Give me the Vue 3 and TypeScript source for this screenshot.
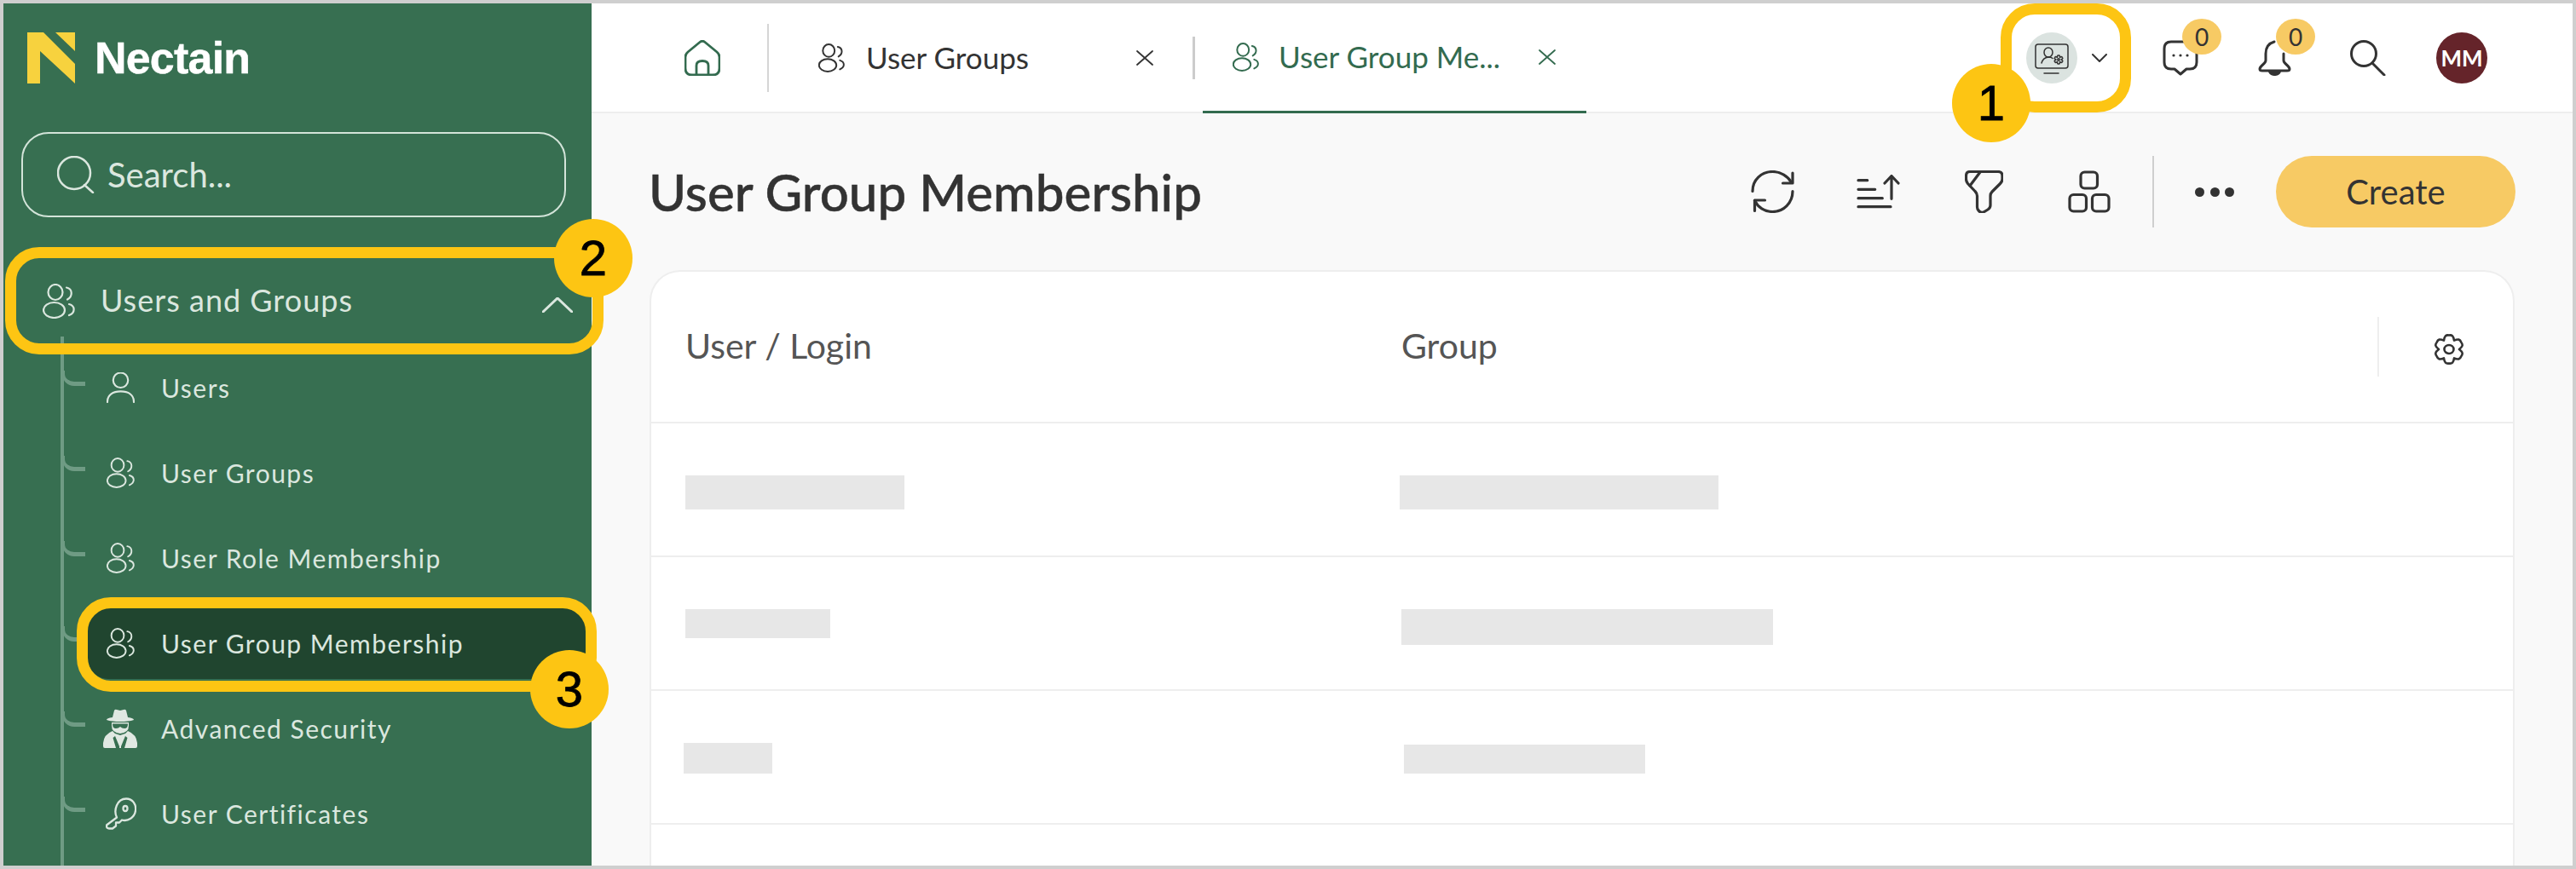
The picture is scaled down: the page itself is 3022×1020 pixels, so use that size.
<script setup lang="ts">
interface NavItem {
  label: string
  icon: string
  active?: boolean
}

const navItems: NavItem[] = [
  { label: 'Users', icon: 'user' },
  { label: 'User Groups', icon: 'users' },
  { label: 'User Role Membership', icon: 'users' },
  { label: 'User Group Membership', icon: 'users', active: true },
  { label: 'Advanced Security', icon: 'spy' },
  { label: 'User Certificates', icon: 'key' },
]

// offsets are relative to the start of each column
const rows = [
  [{ x: 0, y: 0, w: 257, h: 40 }, { x: -2, y: 0, w: 374, h: 40 }],
  [{ x: 0, y: 0, w: 170, h: 34 }, { x: 0, y: 0, w: 436, h: 42 }],
  [{ x: -2, y: 0, w: 104, h: 36 }, { x: 3, y: 2, w: 283, h: 34 }],
  [],
]

function skeletonStyle(c: { x: number; y: number; w: number; h: number }) {
  return {
    width: c.w + 'px',
    height: c.h + 'px',
    marginLeft: c.x + 'px',
    marginTop: c.y + 'px',
  }
}

function gearPath(cx: number, cy: number, rIn: number, rOut: number, lobes: number) {
  let d = ''
  const step = (Math.PI * 2) / lobes
  for (let i = 0; i < lobes; i++) {
    const a = i * step - Math.PI / 2
    const px = (r: number, t: number) => (cx + Math.cos(t) * r).toFixed(2)
    const py = (r: number, t: number) => (cy + Math.sin(t) * r).toFixed(2)
    if (i === 0) d += `M${px(rIn, a - step / 2)} ${py(rIn, a - step / 2)}`
    d += ` C${px(rOut, a - step / 3.2)} ${py(rOut, a - step / 3.2)} ${px(rOut + 1, a - step / 5)} ${py(rOut + 1, a - step / 5)} ${px(rOut, a)} ${py(rOut, a)}`
    d += ` C${px(rOut + 1, a + step / 5)} ${py(rOut + 1, a + step / 5)} ${px(rOut, a + step / 3.2)} ${py(rOut, a + step / 3.2)} ${px(rIn, a + step / 2)} ${py(rIn, a + step / 2)}`
  }
  return d + ' Z'
}
</script>

<template>
  <div class="frame">
    <svg class="defs" width="0" height="0">
      <symbol id="i-users" viewBox="0 0 38 41">
        <ellipse cx="15" cy="10" rx="8.500" ry="9" />
        <ellipse cx="13.500" cy="31" rx="12.500" ry="9" />
        <path d="M28 4.500C35.500 6 35.500 15 29 18.500" />
        <path d="M31 24C38.500 26 38.500 34 31 37" />
      </symbol>
      <symbol id="i-user" viewBox="0 0 34 37">
        <ellipse cx="17" cy="9.500" rx="9" ry="9" />
        <path d="M1 36C1 27 8 23 17 23S33 27 33 36" />
      </symbol>
    </svg>

    <aside class="sidebar">
      <div class="brand">
        <svg class="brand-mark" viewBox="0 0 56 60">
          <path d="M0 0H19L56 37V60L15 22V60H0Z" fill="#f7d23e" />
          <path d="M33 0H56V22Z" fill="#f7d23e" />
        </svg>
        <span class="brand-name">Nectain</span>
      </div>

      <div class="search">
        <svg class="search-icon" viewBox="0 0 44 44">
          <ellipse cx="20" cy="20" rx="19" ry="19" />
          <path d="M32 34L42 43" />
        </svg>
        <span>Search...</span>
      </div>

      <div class="group">
        <svg class="group-icon"><use href="#i-users" /></svg>
        <span class="group-label">Users and Groups</span>
        <svg class="group-chevron" viewBox="0 0 36 18">
          <path d="M1 17L18 1L35 17" />
        </svg>
      </div>

      <ul class="tree">
        <li v-for="item in navItems" :key="item.label" class="tree-item">
          <div class="tree-body" :class="{ active: item.active }">
            <svg v-if="item.icon === 'user'" class="tree-icon"><use href="#i-user" /></svg>
            <svg v-else-if="item.icon === 'users'" class="tree-icon"><use href="#i-users" /></svg>
            <svg v-else-if="item.icon === 'spy'" class="tree-icon spy" viewBox="0 0 40 46">
              <path d="M11 10L13 2Q14 0 16 1L20 2L24 1Q26 0 27 2L29 10Q36 11 36 13Q30 15 20 15T4 13Q4 11 11 10Z" />
              <path d="M10 16H30V20Q30 28 20 29Q10 28 10 20Z" />
              <path class="spy-cut" d="M11 17.500H29Q29 23 25 23Q22 23 20 21Q18 23 15 23Q11 23 11 17.500Z" />
              <path d="M11 26L14 29L20 31L26 29L29 26Q39 30 40 40V44Q40 46 38 46H2Q0 46 0 44V40Q1 30 11 26Z" />
              <path class="spy-cut" d="M13 29.500L19 44V46H15L11.500 34L14 32Z" />
              <path class="spy-cut" d="M27 29.500L21 44V46H25L28.500 34L26 32Z" />
            </svg>
            <svg v-else class="tree-icon key" viewBox="0 0 36 37">
              <path d="M13 23C9 15 13 1 24 1C32 1 36 8 35 15C34 23 26 28 19 26L16 29H12V33L8 36H4Q1 36 1 33V32Z" />
              <ellipse cx="23" cy="12.500" rx="2.500" ry="3" />
            </svg>
            <span>{{ item.label }}</span>
          </div>
        </li>
      </ul>
    </aside>

    <main class="main">
      <header class="topbar">
        <svg class="home" viewBox="0 0 42 42">
          <path d="M18 2.500Q21 0 24 2.500L38 14Q41 16.500 41 20V33Q41 41 33 41H9Q1 41 1 33V20Q1 16.500 4 14Z" />
          <path d="M14 40V30Q14 24.500 21 24.500Q28 24.500 28 30V40" />
        </svg>
        <span class="tall-divider"></span>
        <div class="tab">
          <svg class="tab-icon"><use href="#i-users" /></svg>
          <span class="tab-label">User Groups</span>
          <svg class="tab-close" viewBox="0 0 20 18"><path d="M1 1L19 17M19 1L1 17" /></svg>
        </div>
        <span class="short-divider"></span>
        <div class="tab tab-active">
          <svg class="tab-icon"><use href="#i-users" /></svg>
          <span class="tab-label">User Group Me...</span>
          <svg class="tab-close" viewBox="0 0 20 18"><path d="M1 1L19 17M19 1L1 17" /></svg>
        </div>

        <div class="top-actions">
          <div class="env">
            <svg viewBox="0 0 40 36">
              <rect x="1" y="1" width="38" height="28" rx="3" />
              <path d="M11 35H28" />
              <ellipse cx="16" cy="10.500" rx="5" ry="5.500" />
              <path d="M8 23C9 19 12 16.500 16 16C18 16 20 16.500 21 17.500" />
              <path :d="gearPath(28, 19, 3, 4.800, 6)" />
              <circle cx="28" cy="19" r="1.200" />
            </svg>
          </div>
          <svg class="chev" viewBox="0 0 18 10"><path d="M1 1L9 9L17 1" /></svg>
          <div class="notify chat">
            <svg viewBox="0 0 42 42">
              <path d="M30 2H10Q2 2 2 10V26Q2 34 10 34H14L21 40L28 34H32Q40 34 40 26V10" />
              <circle cx="13" cy="18" r="1.600" class="dot" />
              <circle cx="21" cy="18" r="1.600" class="dot" />
              <circle cx="29" cy="18" r="1.600" class="dot" />
            </svg>
            <span class="count">0</span>
          </div>
          <div class="notify bell">
            <svg viewBox="0 0 39 42">
              <path d="M19 2C12 4 9 9 9 16V24C9 28 2 30 2 34Q2 36 5 36H34Q37 36 37 34C37 30 30 28 30 24V16" />
              <path d="M12 37H27C26 41 22 42 19.500 42S13 41 12 37Z" class="dot" />
            </svg>
            <span class="count">0</span>
          </div>
          <svg class="top-search" viewBox="0 0 42 42">
            <ellipse cx="16" cy="16" rx="14.500" ry="14.500" />
            <path d="M26 27L40 41" />
          </svg>
          <div class="avatar">MM</div>
        </div>
      </header>

      <section class="page-head">
        <h1>User Group Membership</h1>
        <div class="tools">
          <svg class="tool refresh" viewBox="0 0 51 50">
            <path d="M2 24.500C2 11 12.500 1.500 25.500 1.500C35 1.500 43.500 7 47.500 14" />
            <path d="M49 3V15H37.500" />
            <path d="M49 24.500C49 38 38.500 48.500 25.500 48.500C16 48.500 8 43 4.500 35.500" />
            <path d="M4.500 47.500V35H16.500" />
          </svg>
          <svg class="tool sort" viewBox="0 0 51 40">
            <path d="M2 6.700H12.700M2 17.300H21.700M2 27.700H30.300M2 37.700H40" />
            <path d="M41 28.300V2M33 10L41 1.500L49 10" />
          </svg>
          <svg class="tool filter" viewBox="0 0 45 50">
            <path d="M6 1.500H39Q44 1.500 44 6.500V10Q44 13 41.500 15.500L32 25Q30 27 30 30V41Q30 44 27 46L22 49Q19 50 17 48L16 47Q14.500 45 14.500 43V30Q14.500 27 12 24.500L3.500 15.500Q1.500 13 1.500 10V6.500Q1.500 1.500 6 1.500Z" />
            <path d="M18 2L6 18" />
          </svg>
          <svg class="tool apps" viewBox="0 0 50 50">
            <rect x="15" y="2" width="19.500" height="19" rx="4.500" />
            <rect x="2" y="28.500" width="19.500" height="19.500" rx="4.500" />
            <rect x="28.500" y="28.500" width="19.500" height="19.500" rx="4.500" />
          </svg>
          <span class="tool-divider"></span>
          <div class="dots"><i></i><i></i><i></i></div>
          <button class="create">Create</button>
        </div>
      </section>

      <section class="card">
        <div class="card-head">
          <span class="col">User / Login</span>
          <span class="col">Group</span>
          <span class="head-divider"></span>
          <svg class="gear" viewBox="0 0 40 36">
            <path :d="gearPath(20, 18, 12, 16.500, 6)" />
            <ellipse cx="20" cy="18" rx="5.500" ry="5" />
          </svg>
        </div>
        <div v-for="(row, i) in rows" :key="i" class="row">
          <div v-for="(c, j) in row" :key="j" class="cell">
            <div class="skeleton" :style="skeletonStyle(c)"></div>
          </div>
        </div>
      </section>
    </main>

    <!-- tutorial callouts lying over the ui -->
    <div class="hl hl-1"></div>
    <div class="hl hl-2"></div>
    <div class="hl hl-3"></div>
    <div class="badge b-1">1</div>
    <div class="badge b-2">2</div>
    <div class="badge b-3">3</div>
  </div>
</template>

<style>
html,
body {
  margin: 0;
  background: #fff;
}
</style>

<style scoped>
.frame {
  position: relative;
  box-sizing: border-box;
  width: 3022px;
  height: 1020px;
  border: 4px solid #cfcfcf;
  display: flex;
  overflow: hidden;
  font-family: Lato, "Noto Sans", sans-serif;
  color: #333;
}

.defs {
  position: absolute;
}

svg {
  fill: none;
  stroke: currentColor;
  stroke-linecap: round;
  stroke-linejoin: round;
  flex: none;
  display: block;
}

/* sidebar */
.sidebar {
  position: relative;
  width: 690px;
  flex: none;
  background: #376f51;
  color: #dbe7df;
  overflow: hidden;
}

.brand {
  display: flex;
  align-items: center;
  height: 60px;
  margin: 34px 0 0 28px;
  gap: 23px;
}

.brand-mark {
  width: 56px;
  height: 60px;
  stroke: none;
}

.brand-name {
  font-family: "Liberation Sans", Arial, sans-serif;
  font-size: 52px;
  font-weight: 700;
  letter-spacing: -0.8px;
  color: #fff;
  -webkit-text-stroke: 0.4px #fff;
}

.search {
  box-sizing: border-box;
  display: flex;
  align-items: center;
  width: 639px;
  height: 100px;
  margin: 57px 0 0 21px;
  padding-left: 40px;
  gap: 15px;
  border: 2px solid #d3e4d9;
  border-radius: 32px;
  font-size: 40px;
}

.search-icon {
  width: 44px;
  height: 44px;
  stroke-width: 2.5;
}

.group {
  display: flex;
  align-items: center;
  height: 100px;
  margin-top: 48px;
  padding-left: 46px;
  font-size: 36px;
  letter-spacing: 1px;
}

.group-icon {
  width: 38px;
  height: 41px;
  stroke-width: 2.2;
}

.group-label {
  margin-left: 30px;
  margin-top: -2px;
}

.group-chevron {
  width: 36px;
  height: 18px;
  margin-left: auto;
  margin-right: 22px;
  margin-top: 10px;
  stroke-width: 3;
}

.tree {
  position: relative;
  list-style: none;
  margin: 2px 0 0;
  padding: 0;
  font-size: 30px;
  letter-spacing: 1.5px;
}

.tree::before {
  content: "";
  position: absolute;
  left: 67px;
  top: -10px;
  height: 700px;
  width: 4px;
  background: #6f9b84;
}

.tree-item {
  position: relative;
  height: 100px;
  display: flex;
  align-items: center;
  padding-left: 99px;
}

.tree-item::before {
  content: "";
  position: absolute;
  left: 69px;
  top: 30px;
  width: 27px;
  height: 18px;
  border-left: 3px solid #6f9b84;
  border-bottom: 5px solid #6f9b84;
  border-bottom-left-radius: 14px;
  box-sizing: border-box;
}

.tree-body {
  flex: 1;
  display: flex;
  align-items: center;
  height: 84px;
  padding-left: 22px;
  border-radius: 24px;
}

.tree-body.active {
  background: #20452f;
}

.tree-icon {
  width: 33px;
  height: 36px;
  stroke-width: 2.2;
}

.tree-icon.spy {
  width: 40px;
  height: 46px;
  margin-left: -4px;
  margin-right: -3px;
  fill: #e0e8e2;
  stroke: none;
}

.spy-cut {
  fill: #376f51;
}

.tree-icon.key {
  width: 36px;
  height: 38px;
  margin-left: -1px;
  margin-right: -2px;
  stroke-width: 2.300;
}

.tree-body span {
  margin-left: 31px;
}

/* main */
.main {
  flex: 1;
  min-width: 0;
  display: flex;
  flex-direction: column;
  background: #f9f9f9;
  overflow: hidden;
}

.topbar {
  box-sizing: border-box;
  display: flex;
  align-items: center;
  flex: none;
  height: 129px;
  padding-left: 109px;
  padding-right: 100px;
  background: #fff;
  border-bottom: 2px solid #eeeeee;
}

.home {
  width: 42px;
  height: 42px;
  color: #336b4f;
  stroke-width: 2.800;
}

.tall-divider {
  width: 2px;
  height: 80px;
  margin-left: 55px;
  background: #d5d5d5;
}

.short-divider {
  width: 3px;
  height: 50px;
  background: #cccccc;
}

.tab {
  box-sizing: border-box;
  align-self: stretch;
  display: flex;
  align-items: center;
  width: 497px;
  padding-left: 58px;
  padding-right: 46px;
  font-size: 35px;
  color: #333;
}

.tab-active {
  width: 450px;
  margin-left: 9px;
  margin-bottom: -2px;
  padding-left: 35px;
  padding-right: 36px;
  color: #336b4f;
  border-bottom: 3px solid #336b4f;
}

.tab-icon {
  width: 31px;
  height: 34px;
  stroke-width: 2.400;
}

.tab-label {
  flex: 1;
  margin-left: 25px;
  margin-top: -2px;
  white-space: nowrap;
}

.tab-active .tab-label {
  margin-left: 23px;
}

.tab-close {
  width: 20px;
  height: 18px;
  stroke-width: 1.800;
}

.top-actions {
  margin-left: auto;
  display: flex;
  align-items: center;
}

.env {
  width: 60px;
  height: 60px;
  border-radius: 50%;
  background: #dbe3e0;
  display: flex;
  align-items: center;
  justify-content: center;
}

.env svg {
  width: 40px;
  height: 36px;
  stroke-width: 1.500;
  margin-top: 2px;
}

.chev {
  width: 18px;
  height: 10px;
  margin-left: 17px;
  stroke-width: 2;
}

.notify {
  position: relative;
  width: 42px;
  height: 42px;
}

.notify svg {
  width: 100%;
  height: 100%;
  stroke-width: 3;
}

.dot {
  fill: currentColor;
  stroke: none;
}

.chat {
  margin-left: 65px;
}

.bell {
  width: 39px;
  margin-left: 70px;
}

.count {
  position: absolute;
  left: 23px;
  top: -25px;
  width: 46px;
  height: 42px;
  border-radius: 50%;
  background: #f7ca64;
  font-size: 28px;
  line-height: 42px;
  text-align: center;
}

.bell .count {
  left: 21px;
}

.top-search {
  width: 42px;
  height: 42px;
  margin-left: 69px;
  stroke-width: 3;
}

.avatar {
  width: 60px;
  height: 60px;
  margin-left: 59px;
  border-radius: 50%;
  background: #65242a;
  color: #fff;
  font-size: 26px;
  font-weight: 700;
  line-height: 60px;
  text-align: center;
}

.page-head {
  flex: none;
  display: flex;
  align-items: center;
  height: 84px;
  margin-top: 50px;
  padding: 0 67px;
}

h1 {
  margin: 0;
  font-size: 60px;
  font-weight: 500;
  color: #333;
  white-space: nowrap;
  -webkit-text-stroke: 0.5px #333;
}

.tools {
  margin-left: auto;
  display: flex;
  align-items: center;
}

.tool {
  stroke-width: 3.200;
}

.refresh {
  width: 51px;
  height: 50px;
}

.sort {
  width: 51px;
  height: 40px;
  margin-left: 73px;
}

.filter {
  width: 45px;
  height: 50px;
  margin-left: 76px;
}

.apps {
  width: 50px;
  height: 50px;
  margin-left: 76px;
}

.tool-divider {
  width: 2px;
  height: 84px;
  margin-left: 49px;
  background: #cfcfcf;
}

.dots {
  display: flex;
  justify-content: space-between;
  width: 46px;
  margin-left: 48px;
}

.dots i {
  width: 11px;
  height: 11px;
  border-radius: 50%;
  background: #333;
}

.create {
  width: 281px;
  height: 84px;
  margin-left: 49px;
  border: 0;
  border-radius: 42px;
  background: #f7ca64;
  color: #333;
  font-family: inherit;
  font-size: 40px;
}

.card {
  flex: 1;
  margin: 50px 68px 0;
  background: #fff;
  border: 2px solid #eeeeee;
  border-bottom: 0;
  border-radius: 36px 36px 0 0;
}

.card-head {
  box-sizing: border-box;
  display: flex;
  align-items: center;
  height: 178px;
  padding-left: 40px;
  border-bottom: 2px solid #eeeeee;
  font-size: 41px;
  color: #555;
}

.col {
  width: 840px;
  margin-top: -3px;
}

.head-divider {
  width: 2px;
  height: 70px;
  margin-left: auto;
  background: #eeeeee;
}

.gear {
  width: 40px;
  height: 36px;
  margin-left: 62px;
  margin-right: 55px;
  margin-top: 6px;
  stroke-width: 2.600;
  color: #333;
}

.row {
  box-sizing: border-box;
  display: flex;
  height: 157px;
  padding: 61px 0 0 40px;
  border-bottom: 2px solid #eeeeee;
}

.row:last-child {
  border-bottom: 0;
}

.cell {
  width: 840px;
}

.skeleton {
  background: #e7e7e7;
}

/* callouts */
.hl {
  position: absolute;
  box-sizing: border-box;
  border: 13px solid #fdc513;
  border-radius: 40px;
}

.hl-1 {
  left: 2343px;
  top: 0;
  width: 153px;
  height: 128px;
}

.hl-2 {
  left: 2px;
  top: 286px;
  width: 702px;
  height: 126px;
}

.hl-3 {
  left: 86px;
  top: 697px;
  width: 610px;
  height: 111px;
}

.badge {
  position: absolute;
  width: 92px;
  height: 92px;
  border-radius: 50%;
  background: #fdc513;
  color: #000;
  font-family: "Liberation Sans", Arial, sans-serif;
  font-size: 58px;
  line-height: 92px;
  text-align: center;
  -webkit-text-stroke: 0.8px #000;
}

.b-1 {
  left: 2286px;
  top: 71px;
}

.b-2 {
  left: 646px;
  top: 253px;
}

.b-3 {
  left: 618px;
  top: 759px;
}
</style>
